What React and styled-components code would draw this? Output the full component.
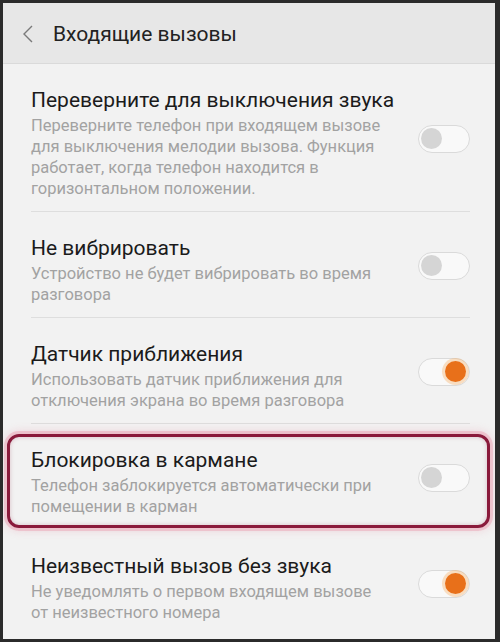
import React from "react";
import styled, { createGlobalStyle } from "styled-components";

const GlobalStyle = createGlobalStyle`
  html, body {
    margin: 0;
    padding: 0;
    background: #2b2b2b;
  }
  * { box-sizing: border-box; }
`;

const items = [
  {
    title: "Переверните для выключения звука",
    desc: "Переверните телефон при входящем вызове для выключения мелодии вызова. Функция работает, когда телефон находится в горизонтальном положении.",
    on: false,
  },
  {
    title: "Не вибрировать",
    desc: "Устройство не будет вибрировать во время разговора",
    on: false,
  },
  {
    title: "Датчик приближения",
    desc: "Использовать датчик приближения для отключения экрана во время разговора",
    on: true,
  },
  {
    title: "Блокировка в кармане",
    desc: "Телефон заблокируется автоматически при помещении в карман",
    on: false,
    marked: true,
  },
  {
    title: "Неизвестный вызов без звука",
    desc: "Не уведомлять о первом входящем вызове от неизвестного номера",
    on: true,
    last: true,
  },
];

const App = () => {
  return (
    <>
      <GlobalStyle />
      <Frame>
        <Header>
          <Back>
            <svg width="12" height="20" viewBox="0 0 12 20">
              <path d="M10 2 L2 10 L10 18" fill="none" stroke="#7a7a7a" strokeWidth="1.4" />
            </svg>
          </Back>
          <HeaderTitle>Входящие вызовы</HeaderTitle>
        </Header>
        <List>
          {items.map((it) => (
            <Row key={it.title} marked={it.marked} last={it.last}>
              <Texts>
                <Title>{it.title}</Title>
                <Desc>{it.desc}</Desc>
              </Texts>
              <Toggle on={it.on}>
                <Knob on={it.on} />
              </Toggle>
            </Row>
          ))}
        </List>
      </Frame>
    </>
  );
};

export default App;

const Frame = styled.div`
  width: 500px;
  height: 642px;
  border-top: 3px solid #2b2b2b;
  border-left: 3px solid #2b2b2b;
  border-right: 5px solid #2b2b2b;
  border-bottom: 3px solid #2b2b2b;
  background: #f2f2f2;
  overflow: hidden;
  font-family: Roboto, "Noto Sans", sans-serif;
  display: flex;
  flex-direction: column;
`;

const Header = styled.div`
  height: 61px;
  flex-shrink: 0;
  background: #e7e7e7;
  border-bottom: 1px solid #dadada;
  display: flex;
  align-items: center;
  padding-left: 19px;
`;

const Back = styled.div`
  width: 31px;
  display: flex;
  align-items: center;
  margin-top: 2px;
`;

const HeaderTitle = styled.div`
  font-size: 21px;
  color: #222;
  margin-top: 2px;
`;

const List = styled.div`
  display: flex;
  flex-direction: column;
  padding: 0 25px 0 28px;
`;

const Row = styled.div`
  position: relative;
  display: flex;
  align-items: center;
  padding: 23px 0 12px;
  border-bottom: ${(p) => (p.last || p.marked ? "1px solid transparent" : "1px solid #dedede")};

  ${(p) =>
    p.marked &&
    `
    &::after {
      content: "";
      position: absolute;
      left: -24px;
      right: -20px;
      top: 10px;
      bottom: 1px;
      border: 3px solid #8a1a3b;
      border-radius: 12px;
      box-shadow: 0 0 0 3px rgba(232, 150, 170, 0.4), 0 0 8px 3px rgba(232, 150, 170, 0.3), inset 0 0 4px rgba(140, 31, 62, 0.25);
      pointer-events: none;
    }
  `}
`;

const Texts = styled.div`
  flex: 1;
  min-width: 0;
  padding-right: 29px;
`;

const Title = styled.div`
  font-size: 21px;
  line-height: 26px;
  color: #1b1b1b;
  white-space: nowrap;
`;

const Desc = styled.div`
  margin-top: 2px;
  font-size: 16.5px;
  line-height: 21px;
  color: #a2a2a2;
`;

const Toggle = styled.div`
  position: relative;
  flex-shrink: 0;
  width: 52px;
  height: 28px;
  margin-bottom: 8px;
  border-radius: 14px;
  border: 1.5px solid #dadada;
  background: #f9f9f9;
`;

const Knob = styled.div`
  position: absolute;
  top: 2px;
  left: ${(p) => (p.on ? "26px" : "2px")};
  width: 21px;
  height: 21px;
  border-radius: 50%;
  background: ${(p) => (p.on ? "#e8701a" : "#d5d5d5")};
  box-shadow: ${(p) => (p.on ? "0 0 0 3px rgba(245, 170, 90, 0.35)" : "none")};
`;
